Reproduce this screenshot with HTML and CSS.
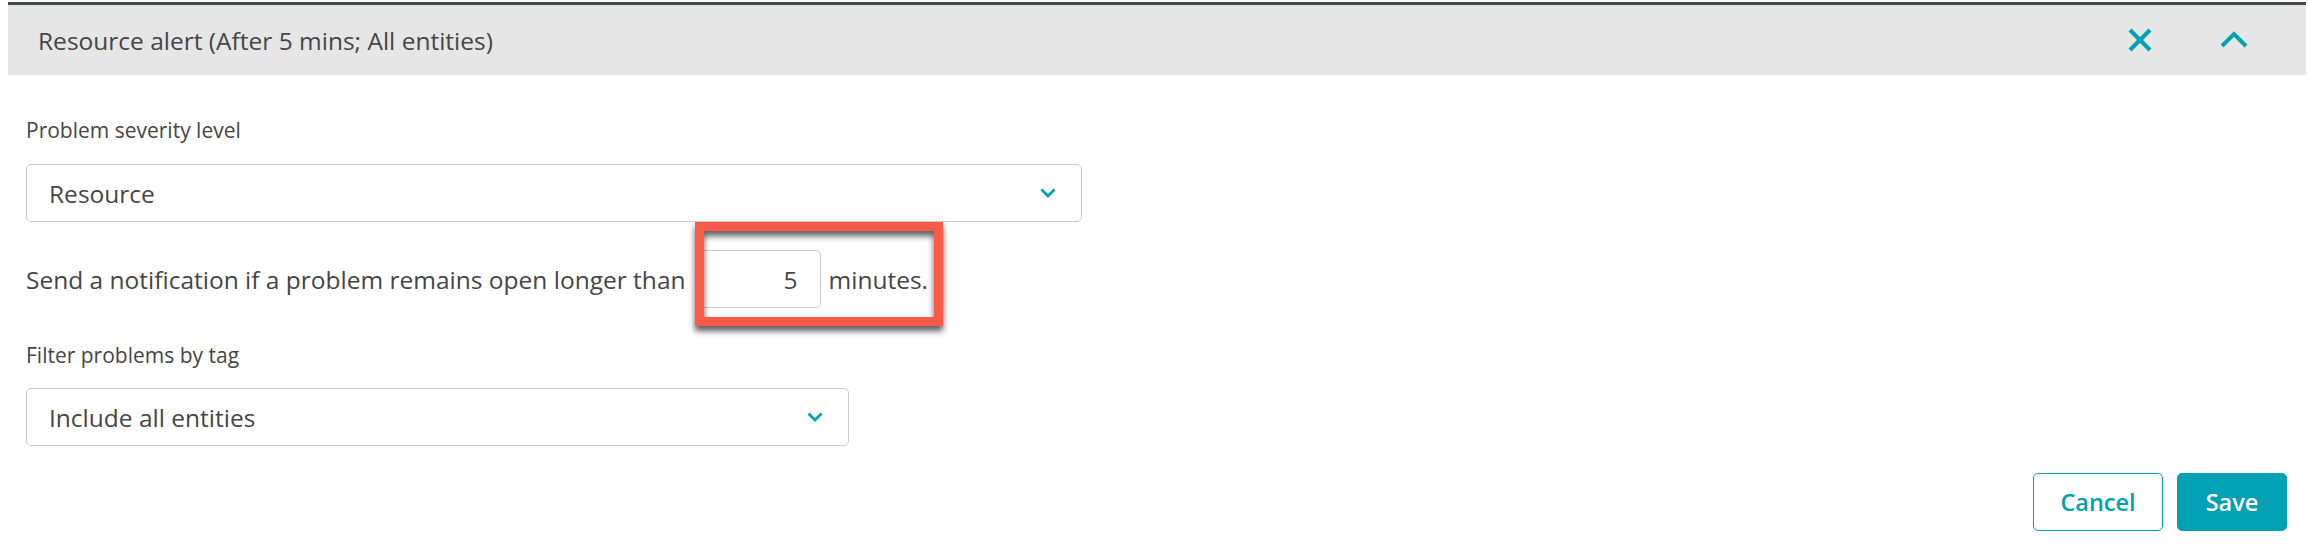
FILE: index.html
```html
<!DOCTYPE html>
<html>
<head>
<meta charset="utf-8">
<link rel="stylesheet" href="styles.css">
</head>
<body>
<div class="panel">
  <div class="header">
    <span class="title">Resource alert (After 5 mins; All entities)</span>
    <div class="actions">
      <button class="icon-btn" aria-label="Remove">
        <svg width="24" height="24" viewBox="0 0 24 24"><path d="M2 2 L22 22 M22 2 L2 22" stroke="#00a1b2" stroke-width="4.2" fill="none"/></svg>
      </button>
      <button class="icon-btn" aria-label="Collapse">
        <svg width="28" height="18" viewBox="0 0 28 18"><path d="M2 15 L14 3 L26 15" stroke="#00a1b2" stroke-width="4" fill="none"/></svg>
      </button>
    </div>
  </div>
  <div class="body">
    <div class="label">Problem severity level</div>
    <div class="select select-wide">
      <span>Resource</span>
      <svg class="chev" width="16" height="10" viewBox="0 0 16 10"><path d="M1.5 1.5 L8 8 L14.5 1.5" stroke="#00a1b2" stroke-width="2.8" fill="none"/></svg>
    </div>
    <div class="row">
      <span>Send a notification if a problem remains open longer than</span>
      <span class="highlight-wrap">
        <span class="num-input">5</span>
        <span class="unit">minutes.</span>
        <span class="highlight"></span>
      </span>
    </div>
    <div class="label label2">Filter problems by tag</div>
    <div class="select select-narrow">
      <span>Include all entities</span>
      <svg class="chev" width="16" height="10" viewBox="0 0 16 10"><path d="M1.5 1.5 L8 8 L14.5 1.5" stroke="#00a1b2" stroke-width="2.8" fill="none"/></svg>
    </div>
    <div class="footer">
      <button class="btn btn-secondary">Cancel</button>
      <button class="btn btn-primary">Save</button>
    </div>
  </div>
</div>
</body>
</html>
```
FILE: styles.css
```css
html, body {
  margin: 0;
  padding: 0;
  background: #ffffff;
}
body {
  font-family: "Open Sans", "Noto Sans", sans-serif;
  color: #454646;
}
.panel {
  margin: 2px 2px 0 8px;
}
.header {
  border-top: 3px solid #454646;
  background: #e6e6e6;
  height: 70px;
  display: flex;
  align-items: center;
  padding-left: 30px;
  padding-right: 58px;
}
.title {
  font-size: 24.5px;
  flex: 1;
}
.actions {
  display: flex;
  align-items: center;
  gap: 68px;
}
.icon-btn {
  border: 0;
  background: transparent;
  padding: 0;
  display: flex;
  align-items: center;
  justify-content: center;
}
.body {
  padding: 42px 19px 20px 18px;
}
.label {
  font-size: 21px;
  line-height: 26px;
}
.label2 {
  margin-top: 34px;
}
.select {
  margin-top: 21px;
  height: 58px;
  box-sizing: border-box;
  border: 1px solid #cccccc;
  border-radius: 5px;
  display: flex;
  align-items: center;
  justify-content: space-between;
  padding: 0 25px 0 22px;
  font-size: 24.5px;
}
.select-wide {
  width: 1056px;
}
.select-narrow {
  width: 823px;
  margin-top: 20px;
}
.chev {
  display: block;
}
.row {
  margin-top: 28px;
  height: 58px;
  display: flex;
  align-items: center;
  font-size: 24.5px;
  gap: 14px;
}
.highlight-wrap {
  position: relative;
  display: flex;
  align-items: center;
  gap: 8px;
  height: 58px;
}
.num-input {
  box-sizing: border-box;
  width: 121px;
  height: 58px;
  border: 1px solid #cccccc;
  border-radius: 5px;
  display: flex;
  align-items: center;
  justify-content: flex-end;
  padding-right: 22px;
}
.highlight {
  position: absolute;
  left: -5px;
  top: -28px;
  width: 248px;
  height: 104px;
  box-sizing: border-box;
  border: 9px solid #fb5a4b;
  box-shadow: 0 5px 6px rgba(40, 40, 40, 0.75), inset 0 5px 6px rgba(40, 40, 40, 0.75);
}
.footer {
  margin-top: 27px;
  display: flex;
  justify-content: flex-end;
  gap: 14px;
}
.btn {
  height: 58px;
  box-sizing: border-box;
  border-radius: 5px;
  font-family: "Open Sans", "Noto Sans", sans-serif;
  font-size: 23.5px;
  font-weight: 600;
  cursor: pointer;
}
.btn-secondary {
  width: 130px;
  background: #ffffff;
  border: 1px solid #00a1b2;
  color: #00a1b2;
}
.btn-primary {
  width: 110px;
  background: #00a1b2;
  border: 1px solid #00a1b2;
  color: #ffffff;
}
```
